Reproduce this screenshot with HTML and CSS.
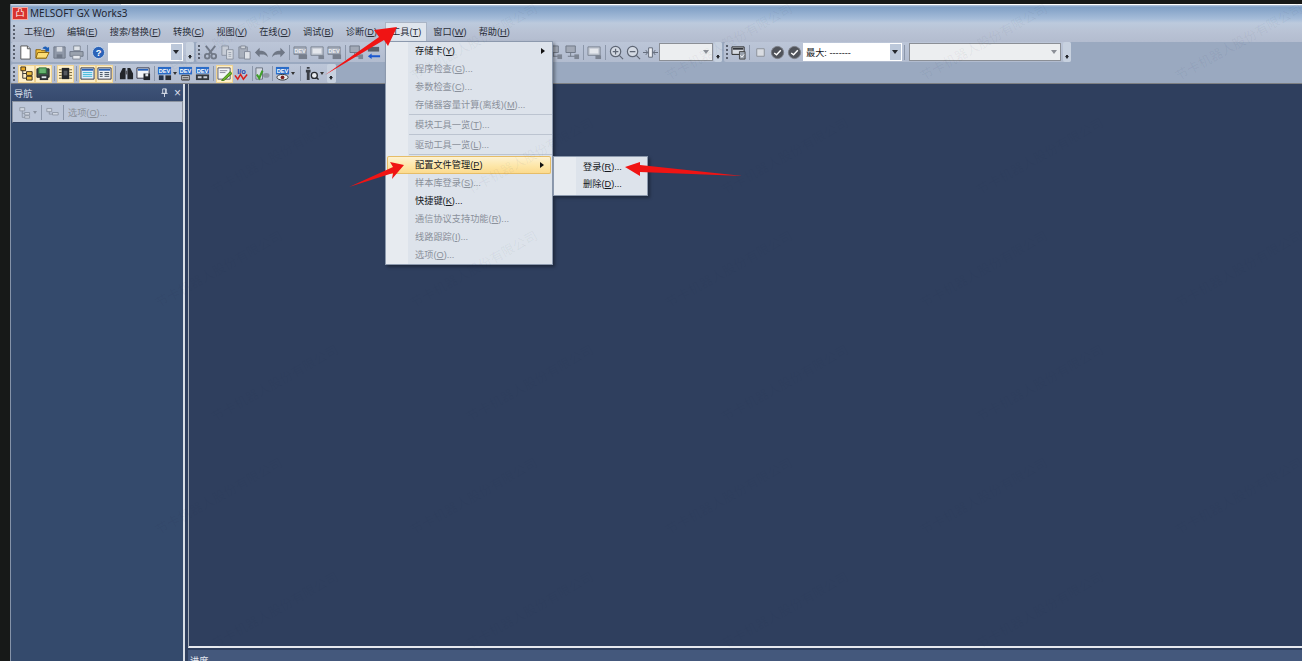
FILE: index.html
```html
<!DOCTYPE html>
<html lang="zh-CN">
<head>
  <meta charset="UTF-8">
  <title>MELSOFT GX Works3</title>
  <link rel="stylesheet" href="styles.css">
</head>
<body>
  <!-- toolbar icons -->
  <svg class="sprite">
    <symbol id="i-new" viewBox="0 0 16 16"><path d="M3 1h7l3 3v11H3z" fill="#fff" stroke="#555"/><path d="M10 1v3h3" fill="#ddd" stroke="#555"/></symbol>
    <symbol id="i-open" viewBox="0 0 16 16"><path d="M1 5h5l1 1h5v8H1z" fill="#f3c23c" stroke="#8a6410"/><path d="M3 8h12l-3 6H1z" fill="#fbdd74" stroke="#8a6410"/><path d="M8 4c1-3 4-3 5-1l2-1v5h-5l1.500-1.500C11 4 9.500 4 8 4z" fill="#1d5fb8"/></symbol>
    <symbol id="i-save" viewBox="0 0 16 16"><path d="M2 2h12v12H2z" fill="#8f98a8" stroke="#6f7888"/><path d="M5 2h6v5H5z" fill="#d5d9e0"/><path d="M5 10h6v4H5z" fill="#6f7888"/></symbol>
    <symbol id="i-print" viewBox="0 0 16 16"><path d="M5 1h7v5H5z" fill="#dfe3e8" stroke="#7f8794"/><path d="M1 7h14v5H1z" fill="#9aa2ae" stroke="#6f7888"/><path d="M4 11h8v4H4z" fill="#e6e9ee" stroke="#7f8794"/></symbol>
    <symbol id="i-help" viewBox="0 0 16 16"><circle cx="8" cy="8" r="6.500" fill="#2a62b8" stroke="#c7d6ea"/><text x="8" y="12" font-size="10" font-weight="700" text-anchor="middle" fill="#fff" font-family="Liberation Sans">?</text></symbol>
    <symbol id="i-cut" viewBox="0 0 16 16"><path d="M3 1l7 9M13 1L6 10" stroke="#727a88" stroke-width="2" fill="none"/><circle cx="4.500" cy="12" r="2.500" fill="none" stroke="#727a88" stroke-width="2"/><circle cx="11.500" cy="12" r="2.500" fill="none" stroke="#727a88" stroke-width="2"/></symbol>
    <symbol id="i-copy" viewBox="0 0 16 16"><path d="M2 1h7v10H2z" fill="#c6ccd6" stroke="#8a92a0"/><path d="M7 5h7v10H7z" fill="#d8dce3" stroke="#8a92a0"/><path d="M9 8h3M9 10h3M9 12h3" stroke="#9aa2ae"/></symbol>
    <symbol id="i-paste" viewBox="0 0 16 16"><path d="M2 2h9v12H2z" fill="#a8afbb" stroke="#838b99"/><path d="M4 1h5v3H4z" fill="#d0d4db" stroke="#838b99"/><path d="M8 7h6v8H8z" fill="#dfe2e7" stroke="#838b99"/></symbol>
    <symbol id="i-undo" viewBox="0 0 16 16"><path d="M1 8l5-5v3c5 0 8 2 9 7-2-3-5-3-9-3v3z" fill="#6f7785"/></symbol>
    <symbol id="i-redo" viewBox="0 0 16 16"><path d="M15 8l-5-5v3c-5 0-8 2-9 7 2-3 5-3 9-3v3z" fill="#6f7785"/></symbol>
    <symbol id="i-devd" viewBox="0 0 16 16"><path d="M1 2h13v8H1z" fill="#a6adba" stroke="#7d8593"/><text x="7.500" y="8" font-size="6" font-weight="700" text-anchor="middle" fill="#eef0f4" font-family="Liberation Sans">DEV</text><path d="M6 10h9v5H6z" fill="#767e8c"/></symbol>
    <symbol id="i-netd" viewBox="0 0 16 16"><path d="M1 1h10v7H1z" fill="#a2a9b6" stroke="#6f7785"/><path d="M6 8v4M3 12h10" stroke="#6f7785"/><path d="M10 10h5v5h-5z" fill="#7d8593"/></symbol>
    <symbol id="i-blue" viewBox="0 0 16 16"><path d="M2 2h12v5H2z" fill="#59606c"/><path d="M15 9v2H6V9l-4 3 4 3v-2h9z" fill="#1b58d0"/></symbol>
    <symbol id="i-monitor" viewBox="0 0 16 16"><path d="M1 2h13v9H1z" fill="#c3c9d3" stroke="#7b8391"/><path d="M3 4h9v5H3z" fill="#e4e7ec"/><path d="M9 11h6v4H9z" fill="#7b8391"/></symbol>
    <symbol id="i-zin" viewBox="0 0 16 16"><circle cx="7" cy="7" r="5.500" fill="#d4dae4" stroke="#5f6775" stroke-width="1.300"/><path d="M4 7h6M7 4v6M11 11l4 4" stroke="#5f6775" stroke-width="1.300"/></symbol>
    <symbol id="i-zout" viewBox="0 0 16 16"><circle cx="7" cy="7" r="5.500" fill="#d4dae4" stroke="#5f6775" stroke-width="1.300"/><path d="M4 7h6M11 11l4 4" stroke="#5f6775" stroke-width="1.300"/></symbol>
    <symbol id="i-fit" viewBox="0 0 16 16"><path d="M6 3h4v10H6z" fill="#eef0f4" stroke="#5f6775"/><path d="M0 8h5M3 5.500L5 8l-2 2.500M16 8h-5M13 5.500L11 8l2 2.500" stroke="#5f6775" fill="none"/></symbol>
    <symbol id="i-tree" viewBox="0 0 16 16"><path d="M2 1h5v4H2z" fill="#e9a825" stroke="#3e3018"/><path d="M4 5v8h4M4 8h4" stroke="#333" fill="none"/><path d="M8 6h6v4H8zM8 11h6v4H8z" fill="#f0c040" stroke="#3e3018"/></symbol>
    <symbol id="i-mon2" viewBox="0 0 16 16"><path d="M1 3h13v9H1z" fill="#3f4a45" stroke="#222"/><path d="M3 2h8v6H3z" fill="#66b36e" stroke="#2e6e3a"/><path d="M4 10h9v5H4z" fill="#2c2f33"/><path d="M6 11h5v2H6z" fill="#dfe3e8"/></symbol>
    <symbol id="i-chip" viewBox="0 0 16 16"><path d="M4 2h8v12H4z" fill="#24262a"/><path d="M1 4h3M1 7h3M1 10h3M1 13h3M12 4h3M12 7h3M12 10h3M12 13h3" stroke="#6c5b30"/><path d="M6 5h4v5H6z" fill="#55585e"/></symbol>
    <symbol id="i-win1" viewBox="0 0 16 16"><path d="M1 2h14v12H1z" fill="#dfeefa" stroke="#334"/><path d="M2 3h12v2H2z" fill="#2a62b8"/><path d="M3 7h10M3 9h10M3 11h10" stroke="#3cb8d8"/></symbol>
    <symbol id="i-win2" viewBox="0 0 16 16"><path d="M1 2h14v12H1z" fill="#eef2f6" stroke="#334"/><path d="M2 3h12v2H2z" fill="#2a62b8"/><path d="M3 7h3M8 7h5M3 9h3M8 9h5M3 11h3M8 11h5" stroke="#3a4a5a"/></symbol>
    <symbol id="i-bino" viewBox="0 0 16 16"><path d="M2 6l2-4h3v12H1V8zM14 6l-2-4H9v12h6V8z" fill="#22252a"/><path d="M7 5h2v4H7z" fill="#55585e"/></symbol>
    <symbol id="i-wsave" viewBox="0 0 16 16"><path d="M1 2h13v11H1z" fill="#f2f4f7" stroke="#334"/><path d="M2 3h11v2H2z" fill="#2a62b8"/><path d="M8 8h7v7H8z" fill="#22252a"/><path d="M10 8h3v3h-3z" fill="#dfe3e8"/></symbol>
    <symbol id="i-dev1" viewBox="0 0 16 16"><path d="M1 1h14v8H1z" fill="#2a6cc8"/><text x="8" y="7.500" font-size="6" font-weight="700" text-anchor="middle" fill="#fff" font-family="Liberation Sans">DEV</text><path d="M2 10h5v5H2z" fill="#23344e"/><path d="M9 10h6v5H9z" fill="#2a2d33"/></symbol>
    <symbol id="i-dev2" viewBox="0 0 16 16"><path d="M1 1h14v8H1z" fill="#2a6cc8"/><text x="8" y="7.500" font-size="6" font-weight="700" text-anchor="middle" fill="#fff" font-family="Liberation Sans">DEV</text><path d="M4 10h8v5H4z" fill="#e4e8ee" stroke="#333"/><path d="M5 12h6M5 14h6" stroke="#333"/></symbol>
    <symbol id="i-dev3" viewBox="0 0 16 16"><path d="M1 1h14v7H1z" fill="#2a6cc8"/><text x="8" y="7" font-size="6" font-weight="700" text-anchor="middle" fill="#fff" font-family="Liberation Sans">DEV</text><path d="M1 9h14v6H1z" fill="#33373e"/><path d="M3 11h4v2H3zM9 11h4v2H9z" fill="#c6ccd6"/></symbol>
    <symbol id="i-dev4" viewBox="0 0 16 16"><path d="M1 1h14v8H1z" fill="#2a6cc8"/><text x="8" y="7.500" font-size="6" font-weight="700" text-anchor="middle" fill="#fff" font-family="Liberation Sans">DEV</text><ellipse cx="8" cy="12" rx="6" ry="3" fill="#e8ebef" stroke="#333"/><circle cx="8" cy="12" r="2" fill="#7a2020"/></symbol>
    <symbol id="i-pen" viewBox="0 0 16 16"><path d="M1 2h13v12H1z" fill="#f4f6f8" stroke="#556"/><path d="M3 5h8M3 7h6" stroke="#889"/><path d="M6 14l8-8 2 2-8 7-3 1z" fill="#6cb82c" stroke="#3e7a12"/></symbol>
    <symbol id="i-io" viewBox="0 0 16 16"><text x="8" y="8" font-size="8" font-weight="700" text-anchor="middle" fill="#2a4aa8" font-family="Liberation Sans">I/o</text><path d="M1 10l3 4 3-5 3 5 4-5" stroke="#d8201c" stroke-width="1.600" fill="none"/></symbol>
    <symbol id="i-ok" viewBox="0 0 16 16"><path d="M1 2h7v12H1z" fill="#d5dae2" stroke="#6a7280"/><path d="M2 9l2.500 4L8 5" stroke="#3f9e2a" stroke-width="2.200" fill="none"/><ellipse cx="12" cy="10" rx="3.500" ry="2.500" fill="#8f96a3"/></symbol>
    <symbol id="i-tool" viewBox="0 0 16 16"><path d="M3 1h3v2H3zM2 4h5v3H2zM3 7h3v8H3z" fill="#3a3e45"/><circle cx="11" cy="10" r="3.200" fill="#e8ebef" stroke="#26292e" stroke-width="1.400"/><path d="M13 12l2.500 2.500" stroke="#26292e" stroke-width="1.500"/></symbol>
    <symbol id="i-cam" viewBox="0 0 16 16"><path d="M1 2h13v8H1z" fill="#d7dbe2" stroke="#222"/><path d="M2 3h11v2H2z" fill="#33363c"/><path d="M9 7h6v8H9z" fill="#9aa2ae" stroke="#444"/><path d="M10 11l1.500 2 2.500-3" stroke="#fff" fill="none"/></symbol>
    <symbol id="i-square" viewBox="0 0 16 16"><path d="M4 4h8v8H4z" fill="#d9dce2" stroke="#8a8f98"/></symbol>
    <symbol id="i-check" viewBox="0 0 16 16"><circle cx="8" cy="8" r="6.500" fill="#50535a" stroke="#7a7d84"/><path d="M4.500 8.500l2.500 2 4.500-5" stroke="#fff" stroke-width="1.500" fill="none"/></symbol>
    <symbol id="i-pane1" viewBox="0 0 16 16"><path d="M1 2h6v4H1zM7 8h6v3H7zM7 12h6v3H7z" fill="#d0d6e0" stroke="#8a92a0"/><path d="M4 6v8h3M4 9h3" stroke="#8a92a0" fill="none"/></symbol>
    <symbol id="i-pane2" viewBox="0 0 16 16"><path d="M1 3h6v4H1zM8 8h7v3H8z" fill="#d0d6e0" stroke="#8a92a0"/><path d="M4 7v3h4" stroke="#8a92a0" fill="none"/></symbol>
    <symbol id="i-pin" viewBox="0 0 10 10"><path d="M3 1h4v5H3zM1.500 6h7M5 6v4M6 1v5" stroke="#d8deea" fill="none"/></symbol>
  </svg>

  <div class="window">
    <div class="top-band">
      <div class="titlebar">
        <span class="app-logo">凸</span>
        <span class="app-title">MELSOFT GX Works3</span>
      </div>
      <div class="menubar">
        <span class="grip"></span>
        <span class="menu-item">工程(<u>P</u>)</span>
        <span class="menu-item">编辑(<u>E</u>)</span>
        <span class="menu-item">搜索/替换(<u>F</u>)</span>
        <span class="menu-item">转换(<u>C</u>)</span>
        <span class="menu-item">视图(<u>V</u>)</span>
        <span class="menu-item">在线(<u>O</u>)</span>
        <span class="menu-item">调试(<u>B</u>)</span>
        <span class="menu-item">诊断(<u>D</u>)</span>
        <span class="menu-item active">工具(<u>T</u>)
          <div class="popup tools-menu">
            <div class="entry"><span>存储卡(<u>Y</u>)</span><i class="caret"></i></div>
            <div class="entry off"><span>程序检查(<u>G</u>)...</span></div>
            <div class="entry off"><span>参数检查(<u>C</u>)...</span></div>
            <div class="entry off"><span>存储器容量计算(离线)(<u>M</u>)...</span></div>
            <div class="rule"></div>
            <div class="entry off"><span>模块工具一览(<u>T</u>)...</span></div>
            <div class="rule"></div>
            <div class="entry off"><span>驱动工具一览(<u>L</u>)...</span></div>
            <div class="rule"></div>
            <div class="entry hot"><span>配置文件管理(<u>P</u>)</span><i class="caret"></i>
              <div class="popup sub-menu">
                <div class="entry"><span>登录(<u>R</u>)...</span></div>
                <div class="entry"><span>删除(<u>D</u>)...</span></div>
              </div>
            </div>
            <div class="entry off"><span>样本库登录(<u>S</u>)...</span></div>
            <div class="entry"><span>快捷键(<u>K</u>)...</span></div>
            <div class="entry off"><span>通信协议支持功能(<u>R</u>)...</span></div>
            <div class="entry off"><span>线路跟踪(<u>I</u>)...</span></div>
            <div class="entry off"><span>选项(<u>O</u>)...</span></div>
          </div>
        </span>
        <span class="menu-item">窗口(<u>W</u>)</span>
        <span class="menu-item">帮助(<u>H</u>)</span>
      </div>
    </div>

    <div class="toolbars">
      <div class="tool-row">
        <div class="band">
          <span class="grip"></span>
          <span class="btn"><svg><use href="#i-new"/></svg></span>
          <span class="btn"><svg><use href="#i-open"/></svg></span>
          <span class="btn"><svg><use href="#i-save"/></svg></span>
          <span class="btn"><svg><use href="#i-print"/></svg></span>
          <span class="sep"></span>
          <span class="btn"><svg><use href="#i-help"/></svg></span>
          <span class="combo live first"><b class="drop"></b></span>
          <span class="more"></span>
        </div>
        <div class="band">
          <span class="grip"></span>
          <span class="btn"><svg><use href="#i-cut"/></svg></span>
          <span class="btn"><svg><use href="#i-copy"/></svg></span>
          <span class="btn"><svg><use href="#i-paste"/></svg></span>
          <span class="btn"><svg><use href="#i-undo"/></svg></span>
          <span class="btn"><svg><use href="#i-redo"/></svg></span>
          <span class="sep"></span>
          <span class="btn"><svg><use href="#i-devd"/></svg></span>
          <span class="btn"><svg><use href="#i-monitor"/></svg></span>
          <span class="btn"><svg><use href="#i-devd"/></svg></span>
          <span class="sep"></span>
          <span class="btn"><svg><use href="#i-netd"/></svg></span>
          <span class="btn"><svg><use href="#i-blue"/></svg></span>
          <span class="under-menu"></span>
          <span class="btn"><svg><use href="#i-netd"/></svg></span>
          <span class="btn"><svg><use href="#i-netd"/></svg></span>
          <span class="sep"></span>
          <span class="btn"><svg><use href="#i-monitor"/></svg></span>
          <span class="sep"></span>
          <span class="btn"><svg><use href="#i-zin"/></svg></span>
          <span class="btn"><svg><use href="#i-zout"/></svg></span>
          <span class="btn"><svg><use href="#i-fit"/></svg></span>
          <span class="combo zoom-box"><b class="drop"></b></span>
          <span class="more"></span>
        </div>
        <div class="band">
          <span class="grip"></span>
          <span class="btn"><svg><use href="#i-cam"/></svg></span>
          <span class="sep"></span>
          <span class="btn"><svg><use href="#i-square"/></svg></span>
          <span class="btn"><svg><use href="#i-check"/></svg></span>
          <span class="btn"><svg><use href="#i-check"/></svg></span>
          <span class="combo live scan-box">最大: -------<b class="drop"></b></span>
          <span class="sep"></span>
          <span class="combo wide-box"><b class="drop"></b></span>
          <span class="more"></span>
        </div>
      </div>

      <div class="tool-row second">
        <div class="band">
          <span class="grip tight"></span>
          <span class="btn lit"><svg><use href="#i-tree"/></svg></span>
          <span class="btn lit"><svg><use href="#i-mon2"/></svg></span>
          <span class="sep"></span>
          <span class="btn lit"><svg><use href="#i-chip"/></svg></span>
          <span class="sep"></span>
          <span class="btn lit"><svg><use href="#i-win1"/></svg></span>
          <span class="btn lit"><svg><use href="#i-win2"/></svg></span>
          <span class="sep"></span>
          <span class="btn"><svg><use href="#i-bino"/></svg></span>
          <span class="btn"><svg><use href="#i-wsave"/></svg></span>
          <span class="sep"></span>
          <span class="btn has-drop"><svg><use href="#i-dev1"/></svg><i class="mini"></i></span>
          <span class="btn"><svg><use href="#i-dev2"/></svg></span>
          <span class="btn"><svg><use href="#i-dev3"/></svg></span>
          <span class="sep"></span>
          <span class="btn lit"><svg><use href="#i-pen"/></svg></span>
          <span class="btn"><svg><use href="#i-io"/></svg></span>
          <span class="sep"></span>
          <span class="btn narrow"><svg><use href="#i-ok"/></svg></span>
          <span class="sep"></span>
          <span class="btn has-drop"><svg><use href="#i-dev4"/></svg><i class="mini"></i></span>
          <span class="sep late"></span>
          <span class="btn has-drop"><svg><use href="#i-tool"/></svg><i class="mini"></i></span>
          <span class="more tall"></span>
        </div>
      </div>
    </div>

    <div class="workspace">
      <aside class="nav-pane">
        <div class="pane-head">
          <span>导航</span>
          <span class="pane-tools"><svg class="pin"><use href="#i-pin"/></svg><i class="close">×</i></span>
        </div>
        <div class="pane-bar">
          <svg><use href="#i-pane1"/></svg><i class="mini dim"></i>
          <span class="sep"></span>
          <svg><use href="#i-pane2"/></svg>
          <span class="sep"></span>
          <span class="pane-option">选项(<u>O</u>)...</span>
        </div>
      </aside>
      <div class="main-col">
        <main class="mdi"></main>
        <div class="progress-pane">进度</div>
      </div>
    </div>
  </div>

  <!-- watermark that sits over the whole screenshot -->
  <div class="watermark">
    <div class="wm-row"><span>节卡机器人股份有限公司</span><span>节卡机器人股份有限公司</span><span>节卡机器人股份有限公司</span><span>节卡机器人股份有限公司</span><span>节卡机器人股份有限公司</span></div>
    <div class="wm-row alt"><span>节卡机器人股份有限公司</span><span>节卡机器人股份有限公司</span><span>节卡机器人股份有限公司</span><span>节卡机器人股份有限公司</span></div>
    <div class="wm-row"><span>节卡机器人股份有限公司</span><span>节卡机器人股份有限公司</span><span>节卡机器人股份有限公司</span><span>节卡机器人股份有限公司</span><span>节卡机器人股份有限公司</span></div>
    <div class="wm-row alt"><span>节卡机器人股份有限公司</span><span>节卡机器人股份有限公司</span><span>节卡机器人股份有限公司</span><span>节卡机器人股份有限公司</span></div>
    <div class="wm-row"><span>节卡机器人股份有限公司</span><span>节卡机器人股份有限公司</span><span>节卡机器人股份有限公司</span><span>节卡机器人股份有限公司</span><span>节卡机器人股份有限公司</span></div>
    <div class="wm-row alt"><span>节卡机器人股份有限公司</span><span>节卡机器人股份有限公司</span><span>节卡机器人股份有限公司</span><span>节卡机器人股份有限公司</span></div>
  </div>

  <!-- red arrows drawn on top of the screenshot -->
  <svg class="arrows" viewBox="0 0 1302 661">
    <polygon points="325,75 379,37 374,30 397,27 388,46 384,40" fill="#f01414"/>
    <polygon points="349,187 393,167 390,162 404,165 392,179 393,173" fill="#f01414"/>
    <polygon points="743,176 640,172 640,176 625,167 640,162 640,165" fill="#f01414"/>
  </svg>
</body>
</html>
```

FILE: styles.css
```css
html, body {
  height: 100%;
}
body {
  margin: 0;
  padding: 4px 0 0 10px;
  box-sizing: border-box;
  overflow: hidden;
  background-color: #171918;
  font-family: "Liberation Sans", "Noto Sans CJK SC", sans-serif;
  font-size: 9.2px;
  color: #2a2f3a;
}
u {
  text-decoration: underline;
}
i {
  font-style: normal;
}
.sprite {
  display: none;
}

/* window */
.window {
  display: flex;
  flex-direction: column;
  height: 657px;
  border-left: 1px solid #8593a8;
}

/* title and menu share one gradient */
.top-band {
  background:
    linear-gradient(#fff, #fff) no-repeat 110px 0 / 100% 1px,
    linear-gradient(#d6dde8 0, #7f9fc5 3px, #a6bdd9 15px, #bccadd 19px, #b9c3d5 27px, #b3bccf 38px);
}
.titlebar {
  display: flex;
  align-items: center;
  height: 18px;
  padding-left: 1px;
}
.app-logo {
  display: flex;
  justify-content: center;
  align-items: center;
  width: 16px;
  height: 13px;
  background-color: #d8322e;
  border: 1px solid #f2a8a0;
  box-sizing: border-box;
  color: #fff;
  font-size: 9px;
  line-height: 1;
}
.app-title {
  margin-left: 2px;
  font-family: "Noto Sans", "Liberation Sans", sans-serif;
  font-size: 10px;
  color: #1f2530;
}
.menubar {
  display: flex;
  align-items: center;
  height: 20px;
  padding-left: 2px;
}
.menubar .grip {
  margin-right: 3px;
}
.menu-item {
  padding: 0 6.100px;
  height: 20px;
  line-height: 20px;
  white-space: nowrap;
}
.menu-item.active {
  position: relative;
  margin-left: 2px;
  padding: 0 5px;
  background-color: #dfe5ed;
  box-sizing: border-box;
  border: 1px solid #aab5c6;
  border-bottom: 0;
  line-height: 19px;
}

/* dropdown menus */
.popup {
  position: absolute;
  z-index: 5;
  background: linear-gradient(90deg, #e7ebf0 22px, #dde3eb 22px);
  border: 1px solid #8c99ad;
  box-shadow: 2px 2px 3px rgba(0, 0, 0, 0.35);
  color: #16181c;
}
.tools-menu {
  top: 18px;
  left: -1px;
  width: 166px;
}
.sub-menu {
  top: 0;
  left: 166px;
  width: 93px;
  padding: 2px 0;
}
.sub-menu .entry {
  padding-left: 29px;
  height: 17px;
  line-height: 17px;
}
.entry {
  position: relative;
  display: flex;
  height: 18px;
  padding-left: 29px;
  line-height: 18px;
  white-space: nowrap;
}
.entry.off {
  color: #8b919b;
}
.entry.hot {
  margin: 0 1px;
  padding-left: 28px;
  background: linear-gradient(#fdf3d6, #fde6a8 55%, #fbd98a);
  border-radius: 2px;
  box-shadow: inset 0 0 0 1px #e6bd68;
}
.caret {
  position: absolute;
  top: 6px;
  right: 7px;
  border-left: 4px solid #111;
  border-top: 3px solid transparent;
  border-bottom: 3px solid transparent;
}
.rule {
  height: 1px;
  margin: 0 0 1px 23px;
  background-color: #bcc4d0;
}

/* toolbars */
.toolbars {
  display: flex;
  flex-direction: column;
  height: 41px;
  background-color: #9aa9c0;
  border-bottom: 1px solid #7d7f82;
  box-sizing: content-box;
}
.tool-row {
  display: flex;
  height: 21px;
}
.tool-row.second {
  height: 20px;
}
.band {
  display: flex;
  align-items: center;
  padding-left: 2px;
  margin-right: 2px;
  height: 20px;
  background: linear-gradient(#bcc6d8, #b2bccf);
  border-radius: 2px;
}
.tool-row.second .band {
  height: 19px;
  margin-top: 1px;
}
.grip {
  flex: none;
  width: 2px;
  height: 14px;
  margin-right: 2px;
  background: repeating-linear-gradient(#59606e 0 2px, transparent 2px 4px);
}
.grip.tight {
  margin-right: 3px;
}
.btn {
  display: flex;
  flex: none;
  justify-content: center;
  align-items: center;
  width: 17px;
  height: 18px;
  box-sizing: border-box;
}
.btn svg {
  flex: none;
  width: 15px;
  height: 15px;
}
.btn.lit {
  background-color: #fdefc8;
  border: 1px solid #efd392;
}
.btn.narrow {
  width: 15px;
}
.btn.has-drop {
  justify-content: flex-start;
  width: 20px;
  padding-left: 0;
}
.mini {
  flex: none;
  margin-left: 1px;
  border-top: 3px solid #333;
  border-left: 2.500px solid transparent;
  border-right: 2.500px solid transparent;
}
.mini.dim {
  border-top-color: #8a92a0;
}
.sep {
  flex: none;
  width: 1px;
  height: 15px;
  margin: 0 2px;
  background-color: #8c97aa;
}
.sep.late {
  margin: 0 3px 0 5px;
}
.under-menu {
  flex: none;
  width: 165px;
}
.combo {
  position: relative;
  flex: none;
  display: flex;
  align-items: center;
  height: 18px;
  box-sizing: border-box;
  background-color: #eceef0;
  border: 1px solid #8b8f96;
}
.combo .drop {
  position: absolute;
  top: 0;
  right: 0;
  width: 11px;
  height: 100%;
}
.combo .drop::after {
  content: "";
  position: absolute;
  top: 6px;
  left: 2px;
  border-top: 4px solid #8b8f96;
  border-left: 3.500px solid transparent;
  border-right: 3.500px solid transparent;
}
.combo.live {
  background-color: #fff;
  border-color: #fff;
  padding-left: 2px;
}
.combo.live .drop {
  background-color: #bcc8da;
}
.combo.live .drop::after {
  border-top-color: #24272d;
}
.combo.first {
  width: 75px;
  margin-left: 1px;
}
.zoom-box {
  width: 54px;
}
.scan-box {
  width: 99px;
  color: #16181c;
}
.wide-box {
  width: 152px;
  margin-left: 2px;
}
.more {
  position: relative;
  flex: none;
  width: 8px;
  height: 20px;
  margin-left: 1px;
  background-color: #c7d1df;
  border-radius: 2px;
}
.band .combo.first + .more {
  margin-left: 3px;
}
.wide-box + .more {
  margin-left: 2px;
}
.more.tall {
  width: 9px;
  height: 19px;
  margin-left: 3px;
}
.more::after {
  content: "";
  position: absolute;
  left: 1.500px;
  bottom: 3px;
  border-top: 3px solid #24272d;
  border-left: 2.500px solid transparent;
  border-right: 2.500px solid transparent;
  box-shadow: 0 -2px 0 -1px #24272d;
}

/* panes */
.workspace {
  flex: 1;
  display: flex;
  min-height: 0;
  background-color: #2f3f5e;
}
.nav-pane {
  flex: none;
  display: flex;
  flex-direction: column;
  width: 172px;
  background-color: #344a6c;
  border-right: 2px solid #d7dde6;
}
.pane-head {
  display: flex;
  justify-content: space-between;
  align-items: center;
  height: 17px;
  padding: 0 2px 0 3px;
  background: linear-gradient(#3f5479, #364a6e);
  color: #d8deea;
}
.pane-tools {
  display: flex;
  align-items: center;
  gap: 5px;
  font-size: 12px;
}
.pin {
  width: 9px;
  height: 9px;
}
.pane-bar {
  display: flex;
  align-items: center;
  height: 22px;
  box-sizing: border-box;
  margin-left: 1px;
  padding-left: 6px;
  background-color: #bcc6d8;
  border: 1px solid #8b93a0;
  border-bottom-color: #2f3f5e;
  color: #8b919b;
}
.pane-bar svg {
  flex: none;
  width: 13px;
  height: 13px;
}
.pane-bar .sep {
  margin: 0 4px;
}
.main-col {
  flex: 1;
  display: flex;
  flex-direction: column;
  min-width: 0;
  margin-left: 3px;
}
.mdi {
  flex: none;
  height: 564px;
  box-sizing: border-box;
  background-color: #2f3f5e;
  border-left: 1px solid #a8b0bc;
  border-bottom: 2px solid #e6e9ee;
}
.progress-pane {
  flex: 1;
  margin-top: 2px;
  padding: 3px 0 0 2px;
  background-color: #44587c;
  color: #e4e8f0;
}

/* overlays */
.watermark {
  position: absolute;
  inset: 0;
  overflow: hidden;
  pointer-events: none;
  z-index: 8;
}
.wm-row {
  display: flex;
  height: 113.500px;
  margin-left: 91px;
  align-items: center;
}
.wm-row:first-child {
  margin-top: -15px;
}
.wm-row.alt {
  margin-left: 147px;
}
.wm-row span {
  flex: none;
  width: 255px;
  text-align: center;
  font-size: 13px;
  font-family: "Noto Sans CJK SC", sans-serif;
  color: rgba(25, 40, 70, 0.06);
  transform: rotate(-29deg);
}
.arrows {
  position: absolute;
  inset: 0;
  width: 1302px;
  height: 661px;
  pointer-events: none;
  z-index: 9;
}
```
